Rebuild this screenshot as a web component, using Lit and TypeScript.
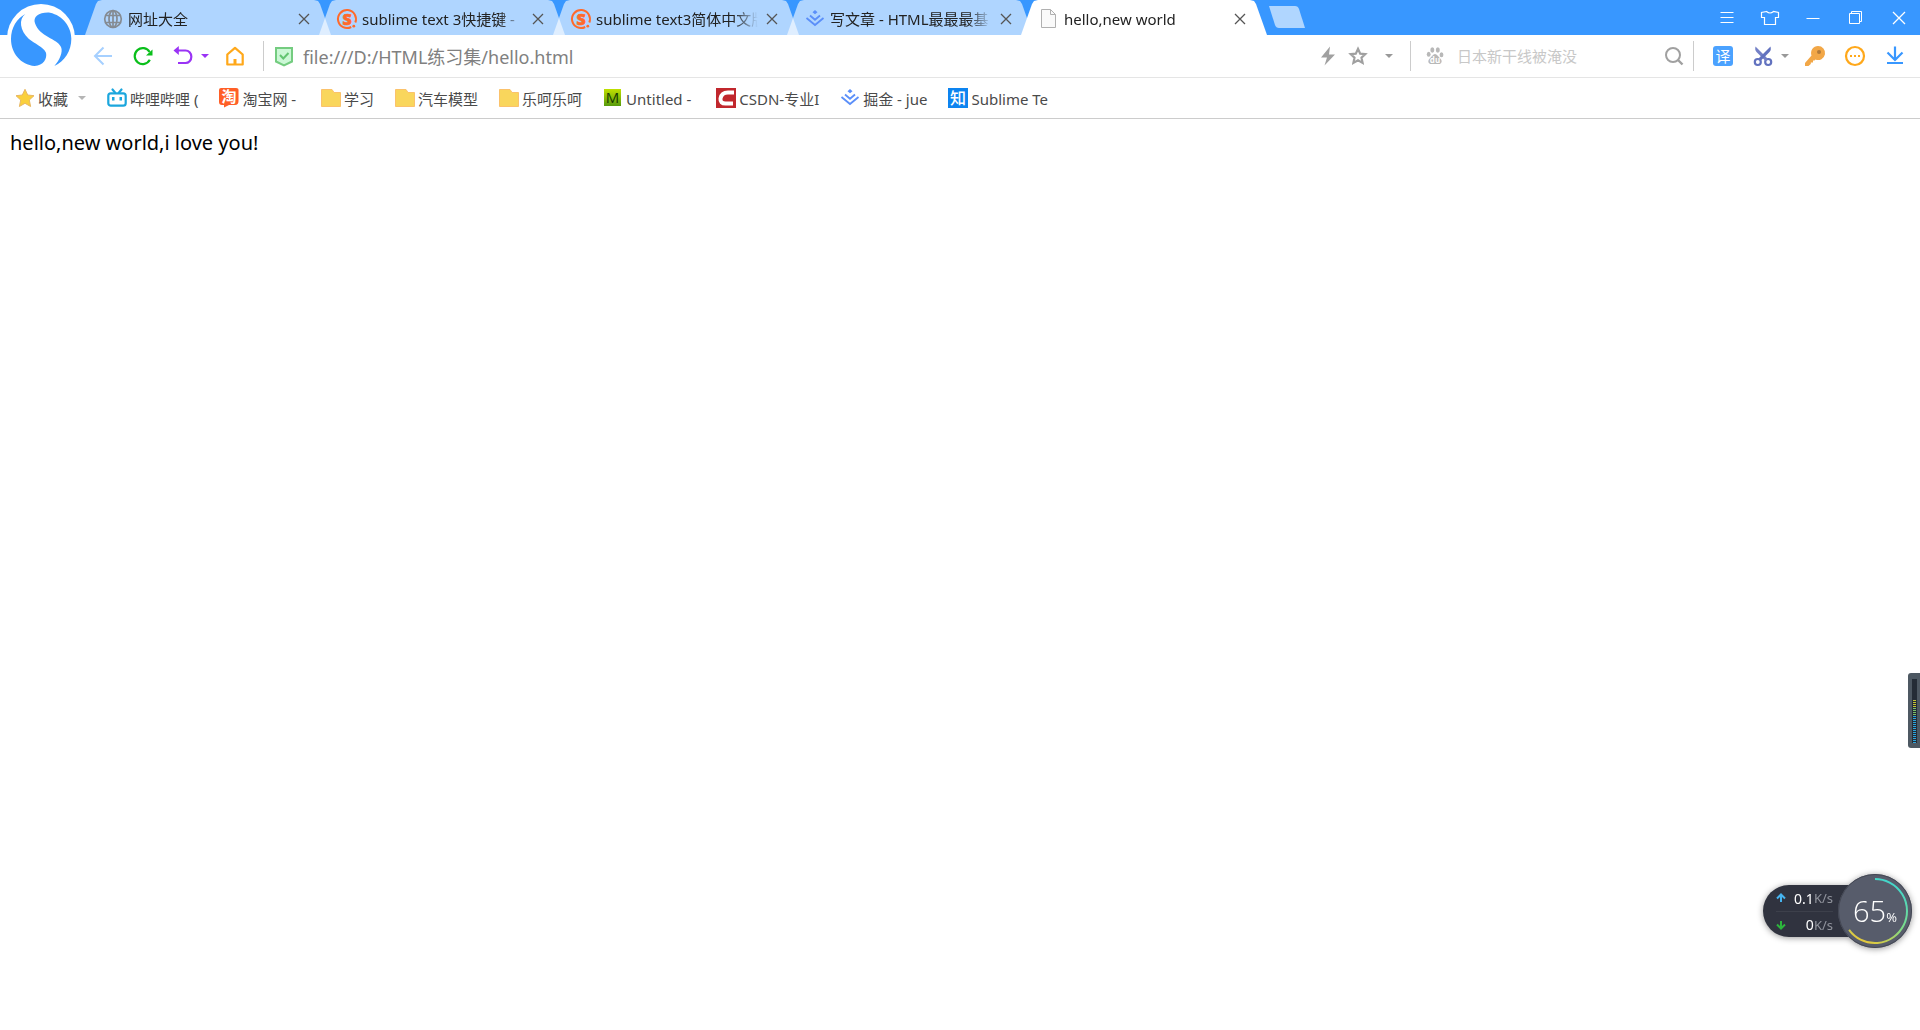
import { LitElement, html, svg, css, TemplateResult } from "lit";
import { customElement, property } from "lit/decorators.js";
import { classMap } from "lit/directives/class-map.js";

const juejin = svg`
  <g fill="none" stroke="#5b8ff9" stroke-width="1.8">
    <path d="M1.500 9 10 16 18.500 9" />
    <path d="M5 6.500 10 10.800 15 6.500" />
  </g>
  <path fill="#5b8ff9" d="M10 1 12.500 3.200 10 5.300 7.500 3.200Z" />`;

const sogou = svg`
  <path fill="none" stroke="#ff6a2b" stroke-width="2" d="M18.300 13.500A9 9 0 1 0 14.200 18" />
  <text x="10" y="15.500" text-anchor="middle" font-size="16" font-weight="800" fill="#ff6a2b" stroke="#ff6a2b" stroke-width=".6" font-family="Open Sans, sans-serif">S</text>
  <circle cx="16.800" cy="17.200" r="1.400" fill="#ff6a2b" />`;

const folder = svg`<path fill="#f9d65c" stroke="#fbc26b" d="M.5 1.500H11L13 4.500H19.500V18.500H.5Z" />`;

const caret = svg`<path fill="currentColor" d="M0 0H8L4 4Z" />`;

const icons: Record<string, TemplateResult> = {
  globe: svg`<g fill="none" stroke="#858b93" stroke-width="1.700">
    <circle cx="10" cy="10" r="8.300" /><ellipse cx="10" cy="10" rx="4" ry="8.300" />
    <path d="M10 1.700V18.300M2.500 6.500H17.500M2.500 13.500H17.500" /></g>`,
  sogou,
  juejin,
  page: svg`<path fill="#fafafa" stroke="#b0b0b0" d="M2.500 .5H11.500L16.500 5.500V18.500H2.500Z" />
    <path fill="none" stroke="#b0b0b0" d="M11.500 .5V5.500H16.500" />`,
  back: svg`<path fill="none" stroke="#a6d0ff" stroke-width="2" d="M10.500 1.500 2 10 10.500 18.500M2 10H19" />`,
  reload: svg`<path fill="none" stroke="#0abf1b" stroke-width="2.200" d="M16.800 13.800A8 8 0 1 1 16.600 6" />
    <path fill="#0abf1b" d="M19.500 3.500V9.500H13Z" />`,
  undo: svg`<path fill="none" stroke="#9a33f5" stroke-width="2.200" d="M3 4.500H12.500A5.800 6.200 0 0 1 12.500 17H5" />
    <path fill="#9a33f5" d="M.5 4.500 5.800 0V9Z" />`,
  home: svg`<path fill="none" stroke="#ffa81a" stroke-width="2.200" stroke-linejoin="round" d="M2.300 18.500V8.500L10 1.800 17.700 8.500V18.500Z" />
    <path fill="#ffa81a" d="M8.500 13H11.500V18H8.500Z" />`,
  shield: svg`<path fill="#ccf8d6" stroke="#74cc80" stroke-width="2" d="M2 2H18V15.500L10 19.300 2 15.500Z" />
    <path fill="none" stroke="#63c571" stroke-width="2" d="M6 9 9.300 12.500 14.500 7" />`,
  bolt: svg`<path fill="#a0a0a0" d="M12 .5 3 11.500H9L6.500 19.500 17 8.500H11Z" />`,
  star: svg`<path fill="none" stroke="#a0a0a0" stroke-width="2.200" d="M10 2.800 12.200 7.600 17.300 8.100 13.500 11.700 14.600 16.900 10 14.300 5.400 16.900 6.500 11.700 2.700 8.100 7.800 7.600Z" />`,
  baidu: svg`<g fill="#b8b8b8"><ellipse cx="7.300" cy="4" rx="2" ry="2.700" /><ellipse cx="12.800" cy="4" rx="2" ry="2.700" />
    <ellipse cx="3.700" cy="8.300" rx="1.900" ry="2.500" /><ellipse cx="16.500" cy="8.800" rx="1.900" ry="2.500" />
    <path d="M10 8C12 8 13 10.500 15 12.200 18 14.800 16.500 18 13.800 18H6.300C3.500 18 2 15 5 12.200 7 10.500 8 8 10 8Z" /></g>
    <text x="10" y="16.500" text-anchor="middle" font-size="8" font-weight="700" fill="#fff" font-family="Open Sans, sans-serif">du</text>`,
  search: svg`<circle cx="9" cy="9" r="7" fill="none" stroke="#a0a0a0" stroke-width="2" /><path stroke="#a0a0a0" stroke-width="2.400" d="M14 14 18.500 18.500" />`,
  translate: svg`<rect width="20" height="20" rx="3" fill="#4ba2ff" />
    <text x="10" y="15.500" text-anchor="middle" font-size="15" fill="#fff" font-family="Noto Sans CJK SC, sans-serif">译</text>`,
  scissors: svg`<g fill="none" stroke="#6272bf" stroke-width="2.200">
    <circle cx="4.800" cy="16" r="3" /><circle cx="15.200" cy="16" r="3" /></g>
    <path fill="#7380c6" d="M2.500 .5 12 10 15 13 12.500 15 9.500 12 3.500 6C2 4.500 2 2.500 2.500 .5Z" />
    <path fill="#6272bf" d="M17.500 .5 8 10 5 13 7.500 15 10.500 12 16.500 6C18 4.500 18 2.500 17.500 .5Z" />`,
  key: svg`<path fill="#f2a747" d="M13 0A7 7 0 1 1 10.500 13.500L9.500 14.500H8V16.500H5.800V18L3.500 20H0V17L6.500 9.500A7 7 0 0 1 13 0Z" /><circle cx="14" cy="6" r="2" fill="#b27a3a" />`,
  more: svg`<circle cx="10" cy="10" r="9" fill="none" stroke="#ffa81a" stroke-width="2.200" />
    <path fill="#ffa81a" d="M5 9H7V11H5ZM9 9H11V11H9ZM13 9H15V11H13Z" />`,
  download: svg`<path fill="none" stroke="#3897ff" stroke-width="2.200" d="M10 .5V14M2.500 6.500 10 14 17.500 6.500M2 17H18" />`,
  favorite: svg`<path fill="#fad03c" stroke="#e8b764" d="M10 1.300 12.700 7 19 7.700 14.300 12 15.600 18.500 10 15.300 4.400 18.500 5.700 12 1 7.700 7.300 7Z" />`,
  bilibili: svg`<g fill="none" stroke="#1ba6dd" stroke-width="2.200"><rect x="1.300" y="5.300" width="17.400" height="12.400" rx="2.500" />
    <path stroke-linecap="round" d="M5.500 1.500 8 4.500M14.500 1.500 12 4.500" /></g>
    <path fill="#1ba6dd" d="M5 9H7.500V12.500H5ZM12.500 9H15V12.500H12.500Z" />`,
  taobao: svg`<path fill="#ff5f27" d="M2 0H17Q20 0 19.500 3V13Q19.500 17 16 17H10L5 19.500V17H3Q0 17 0 14V2Q0 0 2 0Z" />
    <text x="10" y="14" text-anchor="middle" font-size="15" font-weight="700" fill="#fff" font-family="Noto Sans CJK SC, sans-serif">淘</text>`,
  folder,
  untitled: svg`<defs><linearGradient id="lime" x2="0" y2="1"><stop stop-color="#c0e000" /><stop offset="1" stop-color="#579b0d" /></linearGradient></defs>
    <rect x="1" y="1" width="17" height="17" fill="url(#lime)" />
    <text x="9.500" y="15" text-anchor="middle" font-size="15" fill="#173a00" font-family="Open Sans, sans-serif">M</text>`,
  csdn: svg`<rect width="20" height="20" fill="#c1272d" />
    <path fill="none" stroke="#fff" stroke-width="4" d="M18 4.500H12Q5.500 4.500 4.500 10.500 4 15.500 9.500 15.500H17" />`,
  zhihu: svg`<rect width="20" height="20" fill="#0d84f0" />
    <text x="10" y="15.500" text-anchor="middle" font-size="16" font-weight="500" fill="#fff" font-family="Noto Sans CJK SC, sans-serif">知</text>`,
  close: svg`<path fill="none" stroke="currentColor" stroke-width="1.300" d="M5 5 15 15M15 5 5 15" />`,
  menu: svg`<path stroke="#fff" d="M3.500 4.500H16.500M3.500 9.500H16.500M3.500 14.500H16.500" />`,
  skin: svg`<path fill="none" stroke="#fff" stroke-width="1.200" d="M6.500 3.500 1.500 4.500V9.500H4.500V16.500H15.500V9.500H18.500V4.500L13.500 3.500Q10 6.500 6.500 3.500Z" />`,
  minimize: svg`<path stroke="#fff" d="M3.500 10.500H16.500" />`,
  restore: svg`<path fill="none" stroke="#fff" d="M3.500 5.500H13.500V15.500H3.500ZM5.500 5.500V3.500H15.500V13.500H13.500" />`,
  quit: svg`<path stroke="#fff" stroke-width="1.300" d="M4 4 16 16M16 4 4 16" />`,
};

const icon = (name: string) =>
  html`<svg class="icon" viewBox="0 0 20 20" width="20" height="20" aria-hidden="true">${icons[name]}</svg>`;

const caretIcon = () => html`<svg class="caret" viewBox="0 0 8 4" width="8" height="4" aria-hidden="true">${caret}</svg>`;

const shared = css`
  * { box-sizing: border-box; }
  button { display: flex; align-items: center; justify-content: center; padding: 0; border: 0; background: none; color: inherit; font: inherit; }
  .icon { flex: none; display: block; overflow: visible; }
  .caret { flex: none; display: block; }
`;

@customElement("browser-tab")
class BrowserTab extends LitElement {
  @property() icon = "page";
  @property() label = "";
  @property({ type: Boolean, reflect: true }) active = false;

  static styles = [shared, css`
    :host { display: block; flex: 0 1 246px; min-width: 0; margin-right: -12px; }
    .tab {
      display: flex; align-items: center; height: 35px; padding: 2px 17px 0 18px; color: #222;
      background: rgba(255, 255, 255, 0.6);
      clip-path: polygon(0 100%, 11px 4px, 13px 1px, 17px 0, calc(100% - 17px) 0, calc(100% - 13px) 1px, calc(100% - 11px) 4px, 100% 100%);
    }
    .active { background: #fff; }
    .title { flex: 1; min-width: 0; margin: 0 4px 0 5px; overflow: hidden; white-space: nowrap; line-height: 24px;
      mask-image: linear-gradient(to left, transparent, #000 24px); }
    .close { color: #555; width: 20px; height: 20px; }
  `];

  render() {
    return html`<div class=${classMap({ tab: true, active: this.active })} role="tab" aria-selected=${this.active}>
      ${icon(this.icon)}<span class="title">${this.label}</span>
      <button class="close" aria-label="关闭标签">${icon("close")}</button>
    </div>`;
  }
}

@customElement("speed-ball")
class SpeedBall extends LitElement {
  static styles = [shared, css`
    :host { display: flex; align-items: center; filter: drop-shadow(0 1px 3px rgba(0, 0, 0, 0.4)); }
    .rates { width: 112px; margin-right: -37px; padding: 0 42px 0 13px; border-radius: 27px; background: #30333f; color: #fff; }
    .rate { display: flex; align-items: center; height: 26px; font: 14px "Noto Sans", sans-serif; }
    .rate + .rate { border-top: 1px solid #3d404b; }
    .value { flex: 1; text-align: right; }
    .unit { color: #92959e; font-size: 13px; }
    .dial { position: relative; display: flex; align-items: baseline; justify-content: center; width: 74px; height: 74px;
      border-radius: 50%; background: #575c6b; color: #fff; line-height: 74px; }
    .ring { position: absolute; inset: 0; }
    .percent { font: 300 29px/74px "Open Sans", sans-serif; }
    .sign { font: 13px "Open Sans", sans-serif; }
  `];

  render() {
    const arrow = (color: string, d: string) =>
      html`<svg width="10" height="10" viewBox="0 0 10 10" aria-hidden="true"><path fill="none" stroke=${color} stroke-width="2" d=${d} /></svg>`;
    return html`
      <div class="rates">
        <div class="rate">${arrow("#46b4f0", "M5 9V2M1 5.500 5 1.500 9 5.500")}<span class="value">0.1</span><span class="unit">K/s</span></div>
        <div class="rate">${arrow("#2cb53c", "M5 1V8M1 4.500 5 8.500 9 4.500")}<span class="value">0</span><span class="unit">K/s</span></div>
      </div>
      <div class="dial">
        <svg class="ring" viewBox="0 0 74 74" width="74" height="74" aria-hidden="true">
          <defs><linearGradient id="arc" x1=".7" y1="0" x2=".3" y2="1">
            <stop stop-color="#3fd6d0" /><stop offset=".6" stop-color="#7fdc86" /><stop offset="1" stop-color="#e4c83c" />
          </linearGradient></defs>
          <circle cx="37" cy="37" r="36.500" fill="none" stroke="#444854" />
          <path fill="none" stroke="url(#arc)" stroke-width="2" d="M37 5A32 32 0 1 1 11.100 55.800" />
        </svg>
        <span class="percent">65</span><span class="sign">%</span>
      </div>`;
  }
}

const tabs = [
  { icon: "globe", label: "网址大全" },
  { icon: "sogou", label: "sublime text 3快捷键 -" },
  { icon: "sogou", label: "sublime text3简体中文版" },
  { icon: "juejin", label: "写文章 - HTML最最最基" },
  { icon: "page", label: "hello,new world", active: true },
];

// Names are cut to a fixed count of characters, so some end in a space.
const bookmarks = [
  ["bilibili", "哔哩哔哩 ("], ["taobao", "淘宝网 - "], ["folder", "学习"], ["folder", "汽车模型"], ["folder", "乐呵乐呵"],
  ["untitled", "Untitled - "], ["csdn", "CSDN-专业I"], ["juejin", "掘金 - jue"], ["zhihu", "Sublime Te"],
];

const windowButtons = [["menu", "菜单"], ["skin", "皮肤"], ["minimize", "最小化"], ["restore", "还原"], ["quit", "关闭"]];

@customElement("app-root")
class AppRoot extends LitElement {
  static styles = [shared, css`
    :host { display: flex; flex-direction: column; position: relative; min-height: 100vh; overflow: hidden; background: #fff;
      font: 15px "Noto Sans", "Noto Sans CJK SC", sans-serif; color: #222; }
    .tabbar { display: flex; height: 35px; padding-left: 85px; background: #3897ff; }
    .tabs { display: flex; flex: 1; min-width: 0; }
    .newtab { flex: none; width: 36px; height: 22px; margin: 6px 0 0 14px; }
    .window { display: flex; flex: none; }
    .window button { width: 43px; height: 35px; }
    .logo { position: absolute; left: 7px; top: 4px; width: 68px; height: 68px; }
    .toolbar { display: flex; align-items: center; height: 43px; padding: 0 15px 0 93px; border-bottom: 1px solid #e5e5e5; }
    .nav { display: flex; gap: 20px; align-items: center; margin-right: 18px; }
    .split { gap: 8px; margin-right: -4px; }
    .undo { color: #9a33f5; }
    .rule { flex: none; width: 1px; height: 30px; background: #ccc; }
    .address { display: flex; flex: 1; align-items: center; gap: 9px; min-width: 0; padding-left: 10px; }
    input { flex: 1; min-width: 0; height: 30px; padding: 0; border: 0; outline: 0; background: none; font: inherit; }
    .url { color: #808080; font-size: 18px; }
    .actions { display: flex; align-items: center; gap: 10px; padding-right: 17px; color: #999; }
    .actions .caret { margin-left: 7px; }
    .search { display: flex; align-items: center; width: 282px; gap: 12px; padding: 0 9px 0 14px; }
    .search input::placeholder { color: #c8c8c8; opacity: 1; }
    .tools { display: flex; align-items: center; gap: 20px; padding-left: 19px; color: #999; }
    .bookmarks { display: flex; align-items: center; gap: 21px; height: 41px; padding: 2px 15px 0; border-bottom: 1px solid #ccc; color: #4a4a4a; }
    .bookmarks a, .fav { display: flex; align-items: center; gap: 3px; color: inherit; text-decoration: none; white-space: pre; line-height: 24px; }
    .bookmarks .icon { margin-bottom: 2px; }
    .fav .caret { margin: 0 0 3px 7px; color: #b5b5b5; }
    .page { flex: 1; padding: 10px; color: #000; font-size: 20px; line-height: 27px; }
    .page p { margin: 0; }
    .meter { position: absolute; right: 0; top: 673px; }
    speed-ball { position: absolute; right: 8px; top: 874px; }
  `];

  render() {
    return html`
      <header class="tabbar">
        <div class="tabs" role="tablist">
          ${tabs.map((t) => html`<browser-tab .icon=${t.icon} .label=${t.label} ?active=${t.active}></browser-tab>`)}
          <button class="newtab" aria-label="新标签">
            <svg viewBox="0 0 36 22" width="36" height="22" aria-hidden="true"><path fill="#b0d6ff" d="M0 0H26Q29 0 30 3L36 22H10Q7 22 6 19Z" /></svg>
          </button>
        </div>
        <div class="window">${windowButtons.map(([name, label]) => html`<button aria-label=${label}>${icon(name)}</button>`)}</div>
      </header>
      <nav class="toolbar">
        <div class="nav">
          <button aria-label="后退">${icon("back")}</button>
          <button aria-label="刷新">${icon("reload")}</button>
          <button class="split undo" aria-label="恢复">${icon("undo")}${caretIcon()}</button>
          <button aria-label="主页">${icon("home")}</button>
        </div>
        <span class="rule"></span>
        <div class="address">${icon("shield")}<input class="url" aria-label="地址" value="file:///D:/HTML练习集/hello.html" /></div>
        <div class="actions">
          <button aria-label="极速模式">${icon("bolt")}</button>
          <button aria-label="收藏此页">${icon("star")}</button>
          <button aria-label="展开">${caretIcon()}</button>
        </div>
        <span class="rule"></span>
        <div class="search">${icon("baidu")}<input aria-label="搜索" placeholder="日本新干线被淹没" /><button aria-label="搜索">${icon("search")}</button></div>
        <span class="rule"></span>
        <div class="tools">
          <button aria-label="翻译">${icon("translate")}</button>
          <button class="split" aria-label="截图">${icon("scissors")}${caretIcon()}</button>
          <button aria-label="密码">${icon("key")}</button>
          <button aria-label="更多">${icon("more")}</button>
          <button aria-label="下载">${icon("download")}</button>
        </div>
      </nav>
      <nav class="bookmarks">
        <button class="fav">${icon("favorite")}收藏${caretIcon()}</button>
        ${bookmarks.map(([name, label]) => html`<a href="#">${icon(name)}${label}</a>`)}
      </nav>
      <main class="page"><p>hello,new world,i love you!</p></main>
      <svg class="logo" viewBox="21 12 204 204" aria-hidden="true">
        <circle cx="123" cy="114" r="102" fill="#fff" />
        <path fill="#3897ff" d="M76 42C55 58 60 92 86 116 104 132 130 139 138 158 142 176 130 196 104 198 62 194 33 160 33 117 33 84 50 56 76 42Z" />
        <path fill="#3897ff" d="M105 70C98 50 118 36 150 38 188 46 214 80 214 116 214 152 194 184 163 198 178 182 190 156 183 141 172 116 118 110 105 70Z" />
      </svg>
      <svg class="meter" viewBox="0 0 12 75" width="12" height="75" aria-hidden="true">
        <rect width="16" height="75" rx="3" fill="#4d5862" /><rect x="4" y="6" width="5" height="64" fill="#242c36" />
        ${Array.from({ length: 22 }, (_, i) => svg`<rect x="5" y=${27 + i * 2} width="3" height="1" fill=${i < 4 ? "#c5c433" : i < 8 ? "#79c06a" : "#2ba5dd"} />`)}
      </svg>
      <speed-ball></speed-ball>`;
  }
}
